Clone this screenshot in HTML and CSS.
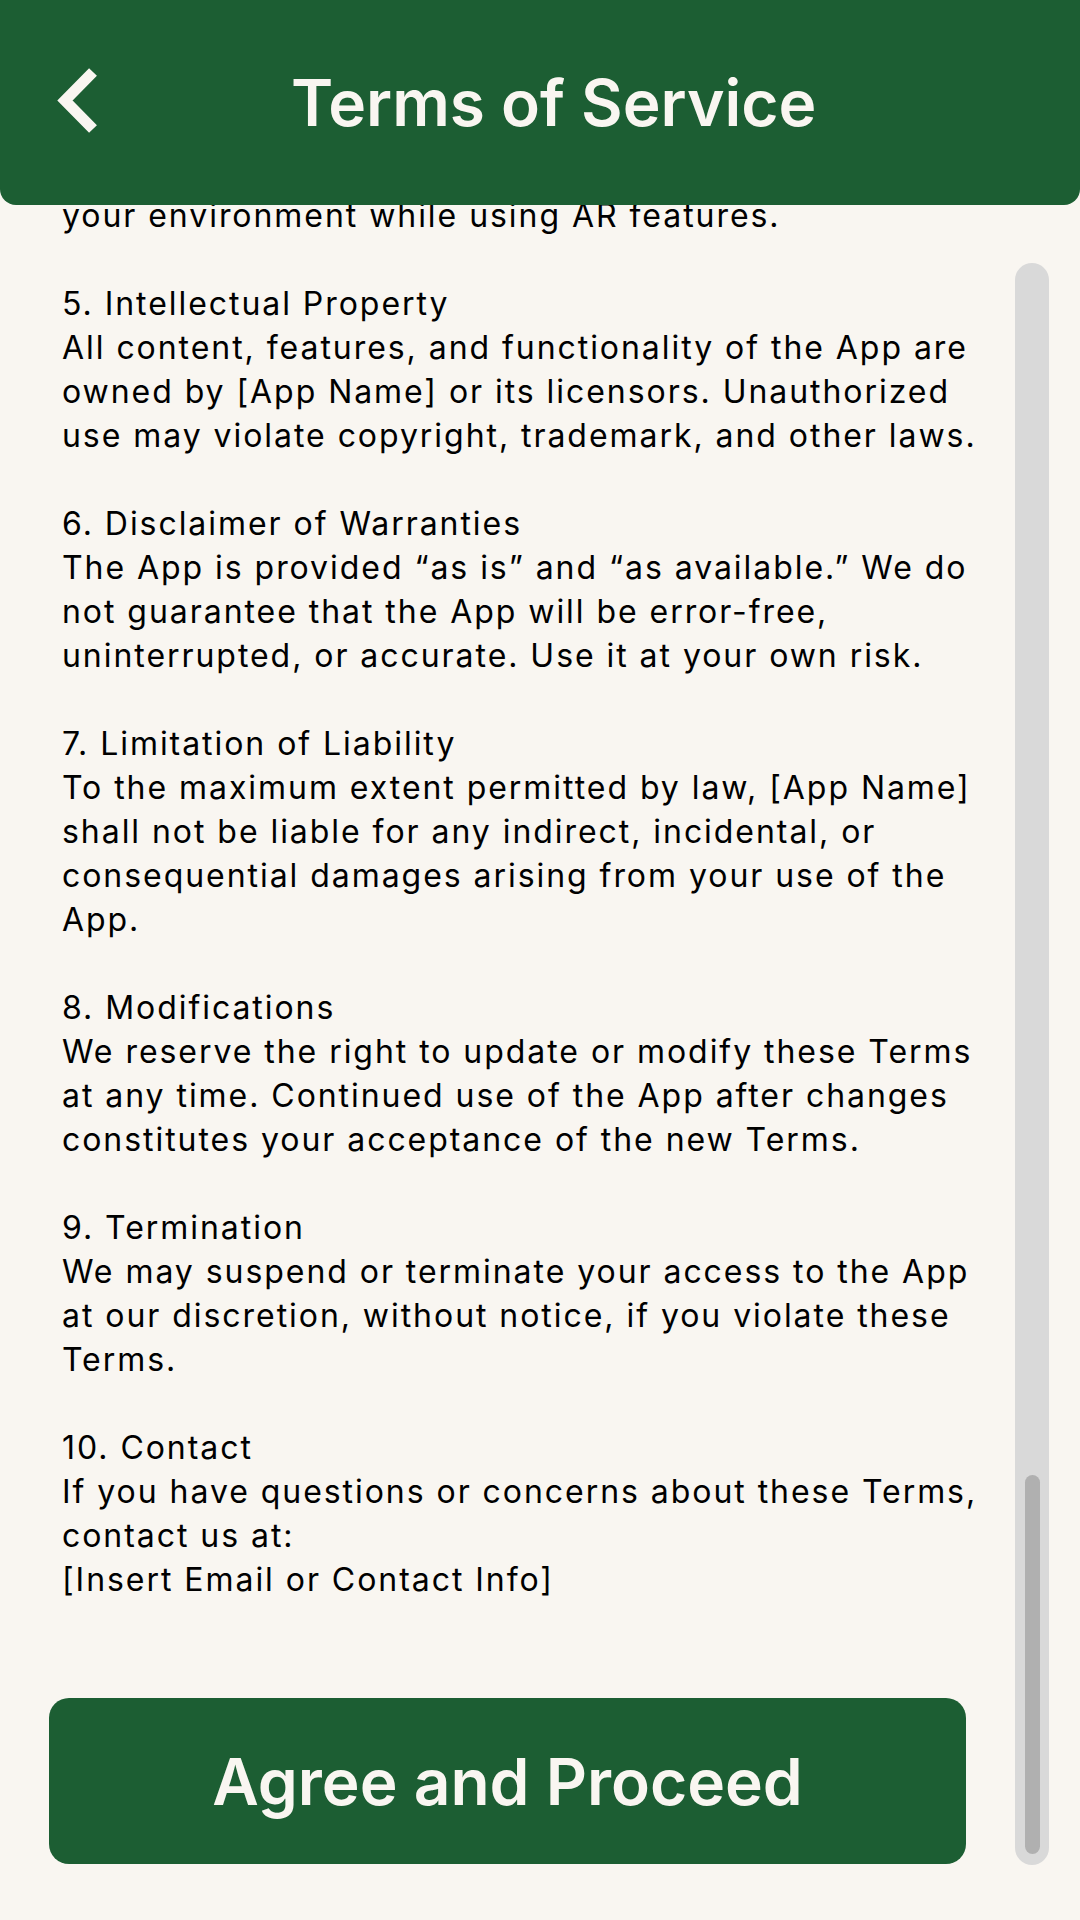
FILE: index.html
```html
<!DOCTYPE html>
<html lang="en">
<head>
<meta charset="utf-8">
<title>Terms of Service</title>
<link rel="stylesheet" href="styles.css">
</head>
<body>
<div class="page">
  <header class="topbar">
    <button class="back" aria-label="Back">
      <svg width="48" height="70" viewBox="0 0 48 70"><polyline points="37,4 9,32.5 37,61" fill="none" stroke="#F9F6F1" stroke-width="11" stroke-linecap="butt" stroke-linejoin="miter"/></svg>
    </button>
    <h1 class="title">Terms of Service</h1>
  </header>
  <div class="main">
    <div class="content">
      <div class="terms">your environment while using AR features.

5. Intellectual Property
All content, features, and functionality of the App are
owned by [App Name] or its licensors. Unauthorized
use may violate copyright, trademark, and other laws.

6. Disclaimer of Warranties
The App is provided “as is” and “as available.” We do
not guarantee that the App will be error-free,
uninterrupted, or accurate. Use it at your own risk.

7. Limitation of Liability
To the maximum extent permitted by law, [App Name]
shall not be liable for any indirect, incidental, or
consequential damages arising from your use of the
App.

8. Modifications
We reserve the right to update or modify these Terms
at any time. Continued use of the App after changes
constitutes your acceptance of the new Terms.

9. Termination
We may suspend or terminate your access to the App
at our discretion, without notice, if you violate these
Terms.

10. Contact
If you have questions or concerns about these Terms,
contact us at:
[Insert Email or Contact Info]</div>
      <button class="agree">Agree and Proceed</button>
    </div>
    <div class="scrollbar">
      <div class="thumb"></div>
    </div>
  </div>
</div>
</body>
</html>
```

FILE: styles.css
```css
html, body {
  margin: 0;
  padding: 0;
}
body {
  width: 1080px;
  height: 1920px;
  overflow: hidden;
  background: #F9F6F1;
  font-family: "Inter", "Noto Sans", sans-serif;
  color: #000;
}
.page {
  position: relative;
  width: 1080px;
  height: 1920px;
}
.topbar {
  position: absolute;
  top: 0;
  left: 0;
  right: 0;
  height: 205px;
  background: #1C5E33;
  border-radius: 0 0 16px 16px;
  display: flex;
  align-items: center;
  z-index: 2;
}
.back {
  margin-left: 56px;
  width: 48px;
  height: 70px;
  padding: 0;
  border: 0;
  background: none;
  display: flex;
}
.title {
  margin: 0 0 0 187px;
  font-size: 64px;
  font-weight: 600;
  color: #F9F6F1;
  letter-spacing: 0;
}
.main {
  display: flex;
  height: 1920px;
}
.content {
  flex: 1;
  display: flex;
  flex-direction: column;
  padding: 194px 0 56px 49px;
  box-sizing: border-box;
}
.terms {
  flex: 1;
  padding-left: 13px;
  white-space: pre;
  font-size: 32px;
  line-height: 44px;
  font-weight: 400;
  letter-spacing: 1.95px;
}
.agree {
  width: 917px;
  height: 166px;
  border: 0;
  border-radius: 20px;
  background: #1C5E33;
  color: #F9F6F1;
  font-family: "Inter", "Noto Sans", sans-serif;
  font-size: 64px;
  font-weight: 600;
  padding: 0;
}
.scrollbar {
  width: 34px;
  margin: 263px 31px 55px 0;
  background: #D9D9D9;
  border-radius: 17px;
  display: flex;
  flex-direction: column;
  justify-content: flex-end;
  align-items: center;
  padding-bottom: 11px;
}
.thumb {
  width: 15px;
  height: 379px;
  background: #B0B0B0;
  border-radius: 8px;
}
```
